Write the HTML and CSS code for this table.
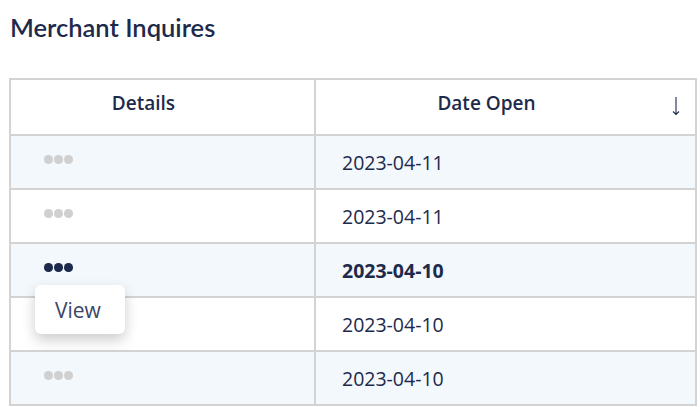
FILE: index.html
```html
<!DOCTYPE html>
<html lang="en">
<head>
<meta charset="utf-8">
<title>Merchant Inquires</title>
<link rel="stylesheet" href="styles.css">
</head>
<body>
<div class="page">
  <h1 class="title">Merchant Inquires</h1>
  <div class="grid">
    <div class="th"><span class="th-label">Details</span><span class="th-icon"></span></div>
    <div class="th"><span class="th-label">Date Open</span><span class="th-icon">
      <svg width="10" height="20" viewBox="0 0 10 20" aria-hidden="true"><path d="M5 1V18.5M2 15.5L5 18.5L8 15.5" fill="none" stroke="#1e2a4b" stroke-width="1.1"/></svg>
    </span></div>

    <div class="td alt"><span class="dots"><i></i><i></i><i></i></span></div>
    <div class="td alt date">2023-04-11</div>

    <div class="td"><span class="dots"><i></i><i></i><i></i></span></div>
    <div class="td date">2023-04-11</div>

    <div class="td alt active"><span class="dots dark"><i></i><i></i><i></i></span>
      <div class="menu">View</div>
    </div>
    <div class="td alt date bold">2023-04-10</div>

    <div class="td"></div>
    <div class="td date">2023-04-10</div>

    <div class="td alt"><span class="dots"><i></i><i></i><i></i></span></div>
    <div class="td alt date">2023-04-10</div>
  </div>
</div>
</body>
</html>
```
FILE: styles.css
```css
* { box-sizing: border-box; }
html, body { margin: 0; padding: 0; background: #fff; }
body { font-family: "Open Sans", "Noto Sans", sans-serif; color: #1e2a4b; }

.page { padding: 0 0 0 9px; }

.title {
  margin: 12px 0 0 1px;
  font-family: Lato, "Open Sans", sans-serif;
  font-size: 25.5px;
  line-height: 30px;
  font-weight: 600;
  color: #1e2a4b;
}

.grid {
  margin-top: 36px;
  width: 688px;
  display: grid;
  grid-template-columns: 303px 1fr;
  grid-auto-rows: 52px;
  grid-template-rows: 54px;
  gap: 2px;
  padding: 2px;
  background: #d4d3d1;
}

.th {
  background: #fff;
  display: flex;
  align-items: center;
  padding-bottom: 8px;
  font-size: 19px;
  font-weight: 600;
}
.th-label { flex: 1; text-align: center; }
.th-icon { width: 38px; display: flex; justify-content: center; align-items: center; padding-top: 6px; }

.td {
  background: #fff;
  display: flex;
  align-items: center;
  position: relative;
}
.td.alt { background: #f2f8fc; }

.date { padding-left: 26px; font-size: 19.5px; }
.bold { font-weight: 700; }

.dots { display: flex; gap: 1.5px; margin-left: 33px; margin-bottom: 5px; }
.dots i { display: block; width: 8.5px; height: 8.5px; border-radius: 50%; background: #d0d0d0; }
.dots.dark i { background: #1e2a4b; }

.menu {
  position: absolute;
  left: 24px;
  top: 41px;
  width: 90px;
  height: 49px;
  background: #fff;
  border-radius: 6px;
  box-shadow: 0 6px 14px rgba(0, 0, 0, 0.2);
  padding-left: 20px;
  display: flex;
  align-items: center;
  font-size: 21px;
  color: #3a4664;
  z-index: 2;
}
```
